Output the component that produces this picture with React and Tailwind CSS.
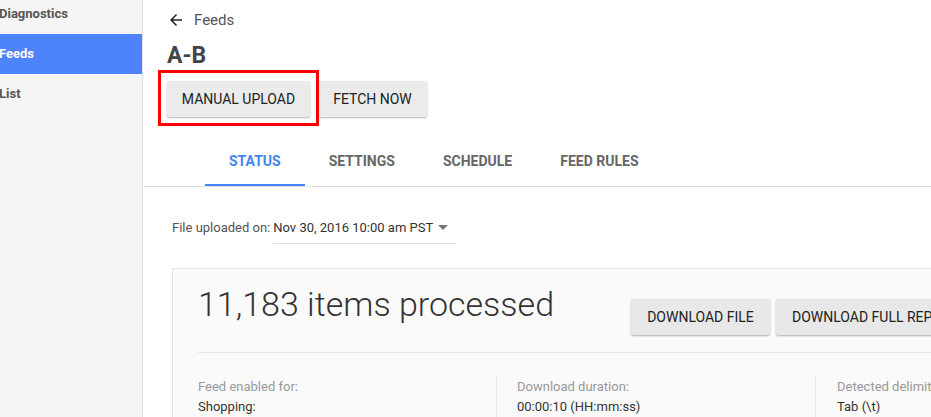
export default function App() {
  const tabs = ["STATUS", "SETTINGS", "SCHEDULE", "FEED RULES"];
  return (
    <div className="flex h-[417px] w-[931px] overflow-hidden bg-white font-['Roboto',_sans-serif]">
      {/* Sidebar */}
      <div className="w-[143px] shrink-0 border-r border-[#e0e0e0] bg-[#f5f5f5]">
        <div className="-mt-[6px] flex flex-col">
          <div className="-ml-px flex h-10 items-center text-[13px] font-bold text-[#555]">Diagnostics</div>
          <div className="flex h-10 items-center bg-[#4d83fb] text-[13px] font-bold text-white">
            <span className="-ml-px">Feeds</span>
          </div>
          <div className="-ml-px flex h-10 items-center text-[13px] font-bold text-[#555]">List</div>
        </div>
      </div>

      {/* Main */}
      <div className="flex min-w-0 flex-1 flex-col">
        <div className="px-6 pt-[8px]">
          <div className="flex h-6 items-center gap-[9px]">
            <svg width="18" height="18" viewBox="0 0 24 24" className="text-[#222]">
              <path fill="currentColor" d="M20 11H7.83l5.59-5.59L12 4l-8 8 8 8 1.41-1.41L7.83 13H20v-2z" />
            </svg>
            <span className="text-[15px] text-[#555]">Feeds</span>
          </div>
          <div className="mt-[10px] text-[23px] font-bold leading-7 text-[#444]">A-B</div>
          <div className="relative mt-[11px] flex gap-2">
            <div className="pointer-events-none absolute -left-[9px] -top-[11px] h-[56px] w-[161px] border-[3px] border-[#ff0000]" />
            <button className="h-9 w-[143px] rounded-[2px] bg-[#ebebeb] text-[14px] text-[#222] shadow-[0_1px_2px_rgba(0,0,0,0.3)]">
              MANUAL UPLOAD
            </button>
            <button className="h-9 w-[109px] rounded-[2px] bg-[#ebebeb] text-[14px] text-[#222] shadow-[0_1px_2px_rgba(0,0,0,0.3)]">
              FETCH NOW
            </button>
          </div>
        </div>

        {/* Tabs */}
        <div className="mt-[20px] flex border-b border-[#e0e0e0] pl-[62px]">
          {tabs.map((t, i) => (
            <div
              key={t}
              className={
                i === 0
                  ? "flex h-[49px] items-center border-b-2 border-[#4285f4] px-6 pt-[2px] text-[14px] font-bold text-[#4285f4]"
                  : "flex h-[49px] items-center px-6 text-[14px] font-bold text-[#666]"
              }
            >
              {t}
            </div>
          ))}
        </div>

        <div className="pl-[29px]">
          <div className="mt-[25px] flex items-center">
            <span className="mr-[3px] text-[13px] text-[#555]">File uploaded on:</span>
            <div className="flex h-8 w-[183px] items-center justify-between border-b border-[#ddd] pr-[8px]">
              <span className="text-[13px] text-[#333]">Nov 30, 2016 10:00 am PST</span>
              <svg width="10" height="5" viewBox="0 0 10 5">
                <path d="M0 0h10L5 5z" fill="#777" />
              </svg>
            </div>
          </div>

          {/* Card */}
          <div className="mt-6 w-[880px] border border-[#e5e5e5] bg-[#fafafa] px-[25px] pb-10">
            <div className="flex items-start border-b border-[#e8e8e8] pb-[17px]">
              <div className="mt-[15px] w-[433px] shrink-0 text-[34px] font-light leading-10 text-[#333]">
                11,183 items processed
              </div>
              <div className="mt-[30px] flex shrink-0 gap-[6px]">
                <button className="h-9 w-[139px] rounded-[2px] bg-[#e8e8e8] text-[14px] text-[#222] shadow-[0_1px_2px_rgba(0,0,0,0.3)]">
                  DOWNLOAD FILE
                </button>
                <button className="h-9 shrink-0 whitespace-nowrap rounded-[2px] bg-[#e8e8e8] px-4 text-[14px] text-[#222] shadow-[0_1px_2px_rgba(0,0,0,0.3)]">
                  DOWNLOAD FULL REPORT
                </button>
              </div>
            </div>
            <div className="mt-6 flex">
              <div className="w-[298px] shrink-0">
                <div className="text-[13px] leading-5 text-[#999]">Feed enabled for:</div>
                <div className="text-[13px] leading-5 text-[#333]">Shopping:</div>
              </div>
              <div className="w-[319px] shrink-0 border-l border-[#e5e5e5] pl-[20px]">
                <div className="text-[13px] leading-5 text-[#999]">Download duration:</div>
                <div className="text-[13px] leading-5 text-[#333]">00:00:10 (HH:mm:ss)</div>
              </div>
              <div className="w-[200px] shrink-0 border-l border-[#e5e5e5] pl-[21px]">
                <div className="whitespace-nowrap text-[13px] leading-5 text-[#999]">Detected delimiter:</div>
                <div className="text-[13px] leading-5 text-[#333]">Tab (\t)</div>
              </div>
            </div>
          </div>
        </div>
      </div>
    </div>
  );
}
